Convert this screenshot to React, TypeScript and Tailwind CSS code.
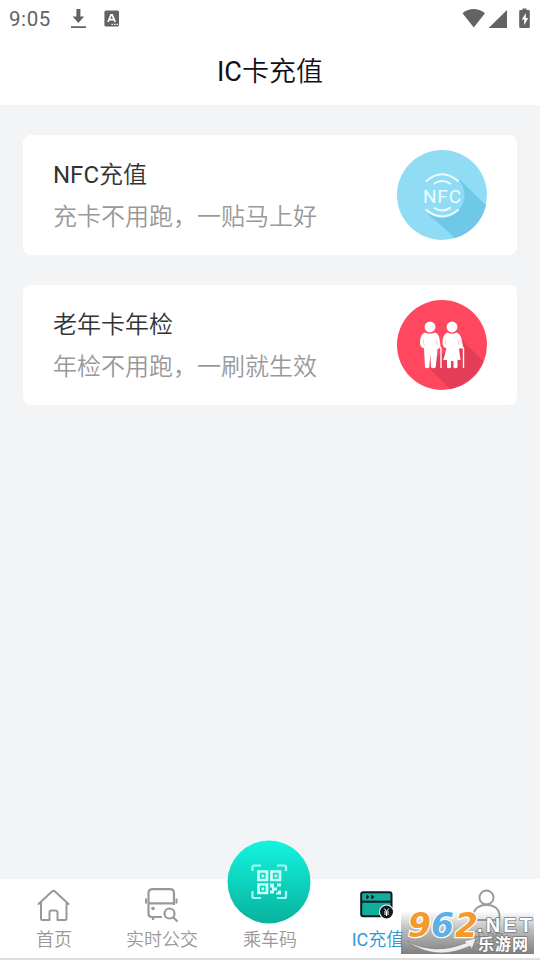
import { FC, ReactNode } from "react";

interface LabelProps {
	latin?: string;
	text: string;
}

interface ServiceCardProps {
	latin?: string;
	title: string;
	subtitle: string;
	icon: ReactNode;
}

interface TabProps {
	latin?: string;
	label: string;
	active?: boolean;
	children?: ReactNode;
}

// The Chinese glyphs are set lighter than the latin prefix
const Label: FC<LabelProps> = ({ latin, text }) => (
	<>
		{latin && <span className="font-normal">{latin}</span>}
		<span className="font-[350]">{text}</span>
	</>
);

const StatusBar: FC = () => (
	<div className="flex h-[37px] items-center justify-between pl-[9px] text-[#636363]">
		<div className="flex items-center">
			<span className="w-[61px] pt-0.5 text-[20.5px] leading-[35px] tracking-[0.6px]">9:05</span>
			<svg width="17" height="20" viewBox="0 0 17 20" className="mt-px" fill="currentColor">
				<path d="M6.4 0h4v7.5h3.8L8.4 14 2.6 7.5h3.8zM1 17.3h15v1.8H1z" />
			</svg>
			<svg width="16" height="17" viewBox="0 0 16 17" className="ml-[17px]">
				<rect x="0.4" y="0.5" width="14.6" height="16" rx="1.5" fill="#636363" />
				<path d="M4 12 7 4.8h1.2L11.2 12M5.3 9.6h4.6" fill="none" stroke="#fff" strokeWidth="1.7" />
				<path d="M7.5 13.7h1.4v1.3H7.5zM10 13.7h1.4v1.3H10zM12.4 13.7h1.4v1.3h-1.4z" fill="#fff" />
			</svg>
		</div>
		<svg width="78" height="22" viewBox="462 7 78 22" fill="currentColor">
			<path d="M462.5 12.2Q473.5 3.8 485 12.2L473.8 26.5z" />
			<path d="M507 9v18h-18.3z" />
			<path d="M522.5 7.5h4v1.5h2.3q1 0 1 1v16q0 1-1 1h-8.6q-1 0-1-1V10q0-1 1-1h2.3z" />
			<path d="M525.8 12 521.8 18.5h2.4v5.8l4-7.3h-2.4z" fill="#fff" />
		</svg>
	</div>
);

const NfcIcon: FC = () => (
	<svg width="90" height="90" viewBox="0 0 90 90">
		<circle cx="45" cy="45" r="45" fill="#8fdcf4" />
		<path d="M62 29 89 55.5A45 45 0 0 1 58 88L31 64z" fill="#70c8e9" />
		<circle cx="45" cy="45" r="22.5" fill="#8fdcf4" />
		<g fill="none" stroke="#eefcff" strokeWidth="2.1" strokeLinecap="round">
			<path d="M29.5 31Q45 17.5 61 31M37.5 33.5Q45 28.5 53 33.5" />
			<path d="M29.5 60Q45 73 61 60M37.5 58Q45 63 53 58" />
		</g>
		<text x="26" y="53.3" fontFamily="Roboto, sans-serif" fontSize="19" textLength="38" fill="#eefcff">NFC</text>
	</svg>
);

const ElderlyIcon: FC = () => (
	<svg width="90" height="90" viewBox="0 0 90 90">
		<circle cx="45" cy="45" r="45" fill="#ff4760" />
		<path d="M65 40 86 61A45 45 0 0 1 53 89L29 65z" fill="#e43d57" />
		<g fill="#fff">
			<circle cx="33" cy="27" r="5.4" />
			<circle cx="55" cy="27" r="5.4" />
			<path d="M28 32.5Q33 35 38 32.5 42 34 42.5 39L43.5 46 42 48.5 40.5 49 40 55 38.7 67.5Q36 69 34 67.5L33.4 54 32.3 67.5Q30 69 28 67.5L27 48.5Q23 47 23 43 23 34 28 32.5z" />
			<path d="M50.5 32.5Q55 35 59.5 32.5 63.5 34 64.5 39L66 46 65 48.5H62L63.5 60H60.5V67.5Q58 69 56.5 67.5V61H54V67.5Q52 69 50 67.5V60H46.3L49.5 48.5Q45.5 47 45.5 43 45.5 34 50.5 32.5z" />
		</g>
		<path d="M26.5 40Q25.5 43 28 45.5M39.3 40 40.3 45M49 40 48 44.5M61 40 62 45" fill="none" stroke="#ffa3b0" strokeWidth="0.6" />
		<path d="M41 47H42.5Q44 47 44 49V68M63 47H65Q66.5 47 66.5 49V68" fill="none" stroke="#fff" strokeWidth="1.4" />
	</svg>
);

const ServiceCard: FC<ServiceCardProps> = ({ latin, title, subtitle, icon }) => (
	<div className="flex h-[120px] items-center justify-between rounded-lg bg-white px-[30px]">
		<div className="pt-0.5 text-[24px] leading-[42px]">
			<div className="text-[#333]">
				<Label latin={latin} text={title} />
			</div>
			<div className="text-[#999]">
				<Label text={subtitle} />
			</div>
		</div>
		{icon}
	</div>
);

const HomeIcon: FC = () => (
	<svg width="34" height="34" viewBox="0 0 34 34" fill="none" stroke="#999" strokeWidth="2" strokeLinejoin="round" strokeLinecap="round">
		<path d="M1.5 16 15 3.5Q16.5 2 18 3.5L31.5 16M4 14V30.5Q4 32 5.5 32H12.5V24.5Q12.5 22.5 14.5 22.5H18.5Q20.5 22.5 20.5 24.5V32H28Q29.5 32 29.5 30.5V14" />
	</svg>
);

const BusIcon: FC = () => (
	<svg width="36" height="36" viewBox="0 0 36 36" fill="none" stroke="#999" strokeWidth="2.2">
		<path d="M18 30H8Q4.5 30 4.5 27V6Q4.5 2.2 8.5 2.2H26Q30 2.2 30 6V18M4.5 16.3H30M9 30V33" />
		<path d="M2 11.5V16.5M32.5 11.5V16.5" strokeWidth="2" />
		<circle cx="9" cy="21.5" r="1.8" fill="#999" stroke="none" />
		<circle cx="25.5" cy="26.5" r="5" />
		<path d="M29 30 33.5 34.5" />
	</svg>
);

const CardIcon: FC = () => (
	<svg width="34" height="30" viewBox="0 0 34 30" className="-mt-px -ml-[2px]">
		<rect x="1.2" y="2.2" width="30.3" height="24" rx="2" fill="#12ae9c" stroke="#101820" strokeWidth="2" />
		<path d="M1 11.7H32" stroke="#101820" strokeWidth="2" />
		<path d="M6.5 5.5 8 7 6.5 8.5M11.5 5.5 13 7 11.5 8.5" fill="none" stroke="#101820" strokeWidth="1.8" />
		<circle cx="26.5" cy="22" r="7.5" fill="#fff" />
		<circle cx="26.5" cy="22" r="6.5" fill="#101820" />
		<path d="M24.3 18.5 26.5 21.5 28.7 18.5M26.5 21.5V26M24 22H29M24 24H29" fill="none" stroke="#fff" strokeWidth="1" />
	</svg>
);

const UserIcon: FC = () => (
	<svg width="34" height="34" viewBox="0 0 34 34" fill="none" stroke="#999" strokeWidth="1.9">
		<circle cx="17.5" cy="9.5" r="7" />
		<path d="M4.5 32V28C4.5 13 30.5 13 30.5 28V32z" />
	</svg>
);

const RideCodeButton: FC = () => (
	<svg width="84" height="84" viewBox="0 0 84 84" className="absolute -top-[39px] left-[11px]">
		<defs>
			<linearGradient id="ride" x1="0" y1="0" x2="0" y2="1">
				<stop offset="0" stopColor="#14f4df" />
				<stop offset="1" stopColor="#08b29d" />
			</linearGradient>
		</defs>
		<circle cx="42" cy="42" r="41.5" fill="url(#ride)" />
		<path d="M25.5 31V27Q25.5 25.5 27 25.5H34M50 25.5H57.5Q59 25.5 59 27V31M25.5 51V56.5Q25.5 58 27 58H34M50 58H57.5Q59 58 59 56.5V51" fill="none" stroke="#a6fff0" strokeWidth="2.2" />
		<path d="M31.5 31.5h8.5v8.5h-8.5zM44.5 31.5h8.5v8.5h-8.5zM31.5 44.5h8.5v8.5h-8.5z" fill="none" stroke="#c6fff7" strokeWidth="2.7" />
		<path d="M34.5 34.5h2.7v2.7h-2.7zM47.5 34.5h2.7v2.7h-2.7zM34.5 47.5h2.7v2.7h-2.7zM43 43.5h4v4h3v3h-3v3h-4v-3h2v-3h-2zM50 43.5h4v3h-4zM51 50.5h3v4h-5v-2h2z" fill="#c6fff7" />
	</svg>
);

const Tab: FC<TabProps> = ({ latin, label, active, children }) => (
	<div className="relative flex flex-1 flex-col items-center pt-2">
		<div className="mb-px flex h-9 items-center justify-center">{children}</div>
		<span className={active ? "text-[18px] leading-8 whitespace-nowrap text-[#3296d2]" : "text-[18px] leading-8 text-[#999]"}>
			<Label latin={latin} text={label} />
		</span>
	</div>
);

const Watermark: FC = () => (
	<svg width="139" height="48" viewBox="401 907 139 48" className="absolute right-0 bottom-[3px]">
		<defs>
			<linearGradient id="shade" x1="0" y1="0" x2="0" y2="1">
				<stop offset="0" stopColor="#888" stopOpacity="0" />
				<stop offset="0.45" stopColor="#8c8c8c" stopOpacity="0.6" />
				<stop offset="1" stopColor="#7c7c7c" stopOpacity="0.97" />
			</linearGradient>
		</defs>
		<rect x="401" y="911" width="133" height="43" fill="url(#shade)" />
		<path d="M407 941Q434 956 466 943L464 941 476 938 472 949 470 946Q435 962 407 941z" fill="#eee" stroke="#777" strokeWidth="0.5" />
		<g fontFamily="DejaVu Sans, sans-serif" fontWeight="bold" fontStyle="italic" fontSize="33" stroke="#fff" strokeWidth="2.5" paintOrder="stroke" strokeLinejoin="round">
			<text x="408" y="937" fill="#f39a2d">9</text>
			<text x="431" y="937" fill="#5cb0e6">6</text>
			<text x="455" y="937" fill="#f39a2d">2</text>
		</g>
		<g fill="#fff" stroke="#777" strokeWidth="1.6" paintOrder="stroke" strokeLinejoin="round" fontWeight="bold">
			<text x="477" y="931.5" fontFamily="Liberation Sans, sans-serif" fontSize="20" textLength="55">.NET</text>
			<text x="478" y="949.5" fontFamily="Noto Sans CJK SC, sans-serif" fontSize="16" textLength="50">乐游网</text>
		</g>
	</svg>
);

const App: FC = () => (
	<div className="flex h-[960px] w-[540px] flex-col overflow-hidden bg-[#f2f4f6] font-['Roboto','Noto_Sans_CJK_SC',sans-serif]">
		<header className="h-[105px] bg-white">
			<StatusBar />
			<h1 className="pt-px text-center text-[27px] leading-[68px] text-[#101018]">
				<Label latin="IC" text="卡充值" />
			</h1>
		</header>
		<main className="flex flex-1 flex-col gap-[30px] px-[23px] pt-[30px]">
			<ServiceCard latin="NFC" title="充值" subtitle="充卡不用跑，一贴马上好" icon={<NfcIcon />} />
			<ServiceCard title="老年卡年检" subtitle="年检不用跑，一刷就生效" icon={<ElderlyIcon />} />
		</main>
		<nav className="relative flex h-[81px] border-b-2 border-[#dedede] bg-white">
			<Tab label="首页">
				<HomeIcon />
			</Tab>
			<Tab label="实时公交">
				<BusIcon />
			</Tab>
			<Tab label="乘车码">
				<RideCodeButton />
			</Tab>
			<Tab latin="IC" label="充值" active>
				<CardIcon />
			</Tab>
			<Tab label="我的">
				<UserIcon />
			</Tab>
			<Watermark />
		</nav>
	</div>
);

export default App;
